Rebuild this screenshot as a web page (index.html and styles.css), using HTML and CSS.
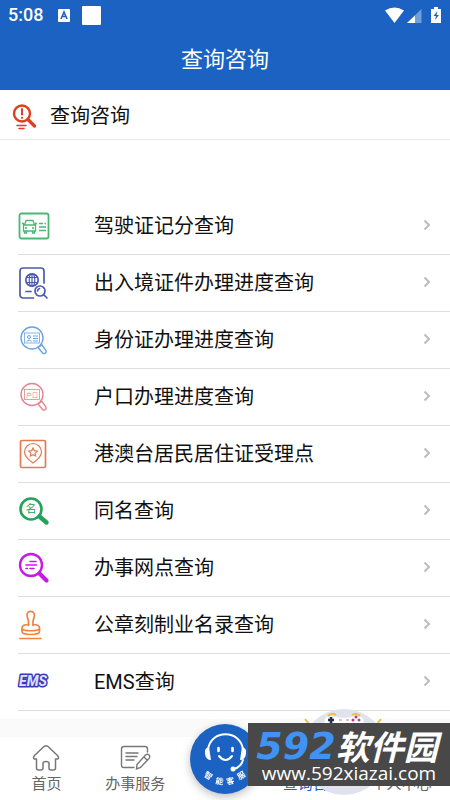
FILE: index.html
```html
<!DOCTYPE html>
<html lang="zh-CN">
<head>
<meta charset="utf-8">
<meta name="viewport" content="width=device-width, initial-scale=1">
<title>查询咨询</title>
<link rel="stylesheet" href="styles.css">
</head>
<body>
<header class="top">
  <div class="status">
    <span class="clock">5:08</span>
    <svg class="ime" viewBox="0 0 12 13"><rect width="12" height="13" rx="1" fill="#fff"/><path d="M3 10L6 3L9 10M4.200 7.500H7.800" fill="none" stroke="#1b62c2" stroke-width="1.600"/></svg>
    <span class="block"></span>
    <svg class="signals" viewBox="0 0 58 18">
      <path d="M1 4.500Q10.500-1.500 20 4.500L10.500 17Z" fill="#fff"/>
      <path d="M23 17L37.500 3V17Z" fill="#6f9edb"/><path d="M23 17L31 9.500V17Z" fill="#fff"/>
      <path d="M47 3h3V1h4v2h3v14H47Z" fill="#fff"/><path d="M53.500 5L49.500 10H52L51 14L55 9H52.500Z" fill="#1b62c2"/>
    </svg>
  </div>
  <h1>查询咨询</h1>
</header>
<main>
  <h2 class="section">
    <svg class="section-icon" viewBox="0 0 26 28" fill="none" stroke="#df3f1c" stroke-linecap="round">
      <circle cx="11" cy="10.500" r="8" stroke-width="2.400"/><path d="M17 16.500L23.500 23" stroke-width="3.400"/><path d="M11 6v5.500M11 14.800v.2" stroke-width="2"/><path d="M6 22.500h9M8 25.500h5" stroke-width="1.600"/>
    </svg>
    查询咨询
  </h2>
  <ul class="list">
    <li><a href="#">
      <svg class="icon" viewBox="0 0 32 32" fill="none" stroke="#49b872" stroke-width="1.300"><rect x="1.500" y="3.500" width="29" height="25" rx="2" stroke-width="1.800"/><path d="M6.500 15L8 10.500h7l1.500 4.500M5.500 15h12v6h-12zM4 13.500h2M17 13.500h2M6.500 21v2h2v-2M14.500 21v2h2v-2M7 18h2M14 18h2M21 13.500h4M21 17h7M21 20.500h7M26.500 13.500h1.500"/></svg>
      <span>驾驶证记分查询</span><svg class="chev" viewBox="0 0 8 12"><path d="M1.500 1.500L6 6L1.500 10.500"/></svg></a></li>
    <li><a href="#">
      <svg class="icon" viewBox="0 0 32 32" fill="none" stroke="#4a5bb0" stroke-width="1.700" stroke-linecap="round"><path d="M15.500 31H5a3 3 0 0 1-3-3V4a3 3 0 0 1 3-3h18a3 3 0 0 1 3 3v12"/><circle cx="14" cy="13" r="6.200"/><ellipse cx="14" cy="13" rx="2.800" ry="6.200" stroke-width="1.200"/><path d="M8.500 10.500h11M8.500 15.500h11M14 7v12" stroke-width="1.200"/><path d="M8 24.500h5"/><circle cx="22" cy="24" r="5"/><path d="M25.500 27.500L29 31M19.500 24a3 3 0 0 1 2-2.500"/></svg>
      <span>出入境证件办理进度查询</span><svg class="chev" viewBox="0 0 8 12"><path d="M1.500 1.500L6 6L1.500 10.500"/></svg></a></li>
    <li><a href="#">
      <svg class="icon" viewBox="0 0 32 32" fill="none" stroke="#68a4e3" stroke-width="1.400"><circle cx="14" cy="14" r="11"/><rect x="6.500" y="9" width="15" height="10" stroke-width=".8"/><path d="M15 12h5M15 14.500h5M15 17h5M8.500 17.500q2.500-3 5 0" stroke-width="1"/><circle cx="11" cy="13" r="1.500" stroke-width="1"/><path d="M20 23.500l4-2.500 4 5.500a2.200 2.200 0 0 1-3.500 2.500z"/></svg>
      <span>身份证办理进度查询</span><svg class="chev" viewBox="0 0 8 12"><path d="M1.500 1.500L6 6L1.500 10.500"/></svg></a></li>
    <li><a href="#">
      <svg class="icon" viewBox="0 0 32 32" fill="none" stroke="#e38690" stroke-width="1.400"><circle cx="14" cy="13.500" r="11"/><rect x="6.500" y="8.500" width="15" height="10" stroke-width=".8"/><text class="micro" x="14" y="16" text-anchor="middle" fill="#e38690" stroke="none">户口</text><path d="M20 23l4-2.500 4 5.500a2.200 2.200 0 0 1-3.500 2.500z"/></svg>
      <span>户口办理进度查询</span><svg class="chev" viewBox="0 0 8 12"><path d="M1.500 1.500L6 6L1.500 10.500"/></svg></a></li>
    <li><a href="#">
      <svg class="icon" viewBox="0 0 32 32" fill="none" stroke="#e47a50" stroke-width="1.200"><rect x="2.500" y="2.500" width="25" height="27" rx="1.500" stroke-width="1.700"/><path d="M15 25Q6.500 19 6.500 14a8.500 8.500 0 0 1 17 0Q23.500 19 15 25Z"/><path d="M15 10l1.300 2.700 3 .4-2.200 2 .5 2.900L15 16.600 12.400 18l.5-2.900-2.200-2 3-.4z"/></svg>
      <span>港澳台居民居住证受理点</span><svg class="chev" viewBox="0 0 8 12"><path d="M1.500 1.500L6 6L1.500 10.500"/></svg></a></li>
    <li><a href="#">
      <svg class="icon" viewBox="0 0 32 32" fill="none" stroke="#25a35a" stroke-linecap="round"><circle cx="13" cy="14" r="10.500" stroke-width="2.600"/><path d="M21.500 21.500L28.500 27.500" stroke-width="4.400"/><text class="mini" x="13" y="18" text-anchor="middle" fill="#25a35a" stroke="none">名</text></svg>
      <span>同名查询</span><svg class="chev" viewBox="0 0 8 12"><path d="M1.500 1.500L6 6L1.500 10.500"/></svg></a></li>
    <li><a href="#">
      <svg class="icon" viewBox="0 0 32 32" fill="none" stroke="#c61be3" stroke-linecap="round"><circle cx="13" cy="13" r="11" stroke-width="2.400"/><path d="M21.500 21.500L28.500 28.500" stroke-width="4.200"/><path d="M12 9.500h6M8 13h10.500M8 16.500h1.500M12 16.500h4" stroke-width="1.500"/></svg>
      <span>办事网点查询</span><svg class="chev" viewBox="0 0 8 12"><path d="M1.500 1.500L6 6L1.500 10.500"/></svg></a></li>
    <li><a href="#">
      <svg class="icon" viewBox="0 0 32 32" fill="none" stroke="#ee8344" stroke-width="1.700" stroke-linecap="round"><path d="M10.500 16.500V12Q9 8 9 6a3.700 3.700 0 0 1 7.400 0Q16.400 8 15 12v4.500"/><path d="M10.500 15.500C6 15.500 4 17 4 19v3.500c0 4 17.500 4 17.500 0V19c0-2-2-3.500-6.500-3.500M4 19.500c1 3 16.500 3 17.500 0M2 29.500h21"/></svg>
      <span>公章刻制业名录查询</span><svg class="chev" viewBox="0 0 8 12"><path d="M1.500 1.500L6 6L1.500 10.500"/></svg></a></li>
    <li><a href="#">
      <svg class="icon" viewBox="0 0 32 32"><text class="ems" x="15" y="20" text-anchor="middle">EMS</text></svg>
      <span>EMS查询</span><svg class="chev" viewBox="0 0 8 12"><path d="M1.500 1.500L6 6L1.500 10.500"/></svg></a></li>
  </ul>
</main>
<footer>
  <nav class="tabs">
    <a href="#"><svg viewBox="0 0 32 30" fill="none" stroke="#777" stroke-width="1.500" stroke-linejoin="round"><path d="M6.500 17H4.500Q2.500 16 4.500 13.500L14 4.500Q16 3 18 4.500L27.500 13.500Q29.500 16 27.500 17H25.500V26Q25.500 28 23.500 28H21Q19 28 19 26V21.500Q19 19.500 16 19.500T13 21.500V26Q13 28 11 28H8.500Q6.500 28 6.500 26Z"/></svg><span>首页</span></a>
    <a href="#"><svg viewBox="0 0 32 30" fill="none" stroke="#777" stroke-width="1.400" stroke-linecap="round"><path d="M15 25.500H5Q2.500 25.500 2.500 23V7Q2.500 4.500 5 4.500H26Q28.500 4.500 28.500 7V10M7 11h12M7 14.500h11M7 18h8M18 22.500L26.500 13q2-1.500 3.500 0t0 3.500L21.500 25.500l-4 1.500zM25 15l3 3"/></svg><span>办事服务</span></a>
    <a class="center" href="#" aria-label="智能客服"></a>
    <a class="active" href="#"><svg viewBox="0 0 32 30"></svg><span>查询咨询</span></a>
    <a href="#"><svg viewBox="0 0 32 30"></svg><span>个人中心</span></a>
  </nav>
  <svg class="service" viewBox="0 0 90 90">
    <circle cx="45" cy="45" r="35" fill="#1b62c2"/>
    <g fill="none" stroke="#fff" stroke-width="2" stroke-linecap="round"><path d="M28 36C30 15 61 15 63 36M63 46Q61 53 54 55"/><path d="M38.500 34v3M52.500 34v3" stroke-width="2.600"/><path d="M39 42Q45.500 50 52 42"/></g>
    <path d="M29 33Q24 34 25 40T31 46ZM62 33Q67 34 66 40T60 46Z" fill="#fff"/><circle cx="53" cy="55" r="2.500" fill="#fff"/>
    <g class="arc" fill="#fff" text-anchor="middle"><text transform="translate(27 64) rotate(32)">智</text><text transform="translate(39 70) rotate(12)">能</text><text transform="translate(51 70) rotate(-12)">客</text><text transform="translate(63 64) rotate(-32)">服</text></g>
  </svg>
  <svg class="mascot" viewBox="0 0 90 90">
    <circle cx="45" cy="45" r="43" fill="#e0e3ec"/>
    <path d="M25 18Q24 8 32 9Q45 12 58 9Q66 8 65 18Z" fill="#fff" stroke="#e4e7ee"/>
    <path d="M29 9q4-4 8-1M53 8q4-3 8 1M6 12l4 5M82 12l-4 5" stroke="#edbd45" stroke-width="2" fill="none"/>
    <path d="M32 10v6M29 13h6" stroke="#222d4c" stroke-width="2.500"/><circle cx="57" cy="10" r="1.500" fill="#d33568"/><circle cx="54" cy="13" r="1.500" fill="#d33568"/><circle cx="60" cy="13" r="1.500" fill="#8557b6"/><path d="M40 13h3M47 13h3" stroke="#d37979"/>
  </svg>
  <div class="brand"><div class="brand-name"><b>592</b><strong>软件园</strong></div><div class="site">www.592xiazai.com</div></div>
</footer>
</body>
</html>
```
FILE: styles.css
```css
* { box-sizing: border-box; }
body {
  margin: 0;
  height: 100vh;
  display: flex;
  flex-direction: column;
  overflow: hidden;
  background: #fff;
  color: #111;
  font-family: Roboto, "Noto Sans CJK SC", sans-serif;
}
a { color: inherit; text-decoration: none; }
h1, h2, ul { margin: 0; padding: 0; font-weight: 400; }
.top { background: #1b62c2; color: #fff; flex: none; }
.status { display: flex; align-items: center; height: 30px; padding: 0 8px; }
.clock { font-size: 18px; font-weight: 500; width: 50px; line-height: 30px; }
.ime { width: 12px; height: 13px; }
.block { width: 19px; height: 19px; margin-left: 12px; background: #fff; border-radius: 1px; }
.signals { width: 58px; height: 18px; margin-left: auto; }
h1 { height: 60px; line-height: 60px; font-size: 22px; text-align: center; }
main { flex: 1; min-height: 0; overflow: hidden; }
.section {
  display: flex;
  align-items: center;
  gap: 13px;
  height: 50px;
  padding: 0 12px 0 11px;
  border-bottom: 1px solid #e8e8e8;
  font-size: 20px;
}
.section-icon { width: 26px; height: 28px; margin-top: 4px; }
.list { list-style: none; padding: 58px 0 0 18px; }
.list a {
  display: flex;
  align-items: center;
  height: 57px;
  padding-right: 18px;
  border-bottom: 1px solid #dedede;
  font-size: 20px;
}
.list span { flex: 1; margin-left: 44px; padding-bottom: 3px; }
.icon { width: 32px; height: 32px; overflow: visible; }
.chev { width: 10px; height: 12px; margin-bottom: 2px; fill: none; stroke: #bcbcbc; stroke-width: 2; }
.micro { font-size: 6px; }
.mini { font-size: 11px; }
.ems {
  font: italic 700 14px Roboto, sans-serif;
  fill: #e0e2fc;
  stroke: #3a3ab8;
  stroke-width: 3;
  stroke-linejoin: round;
  paint-order: stroke;
}
footer { flex: none; position: relative; border-top: 18px solid #fafafa; }
.tabs { display: flex; height: 63px; padding: 0 4px 0 2px; background: #fff; color: #666; font-size: 15px; }
.tabs a { flex: 1; display: flex; flex-direction: column; align-items: center; padding-top: 5px; }
.tabs svg { width: 32px; height: 30px; }
.tabs span { line-height: 24px; white-space: nowrap; }
.tabs .active { color: #1b62c2; }
.service {
  position: absolute;
  left: calc(50% - 45px);
  bottom: -4px;
  width: 90px;
  height: 90px;
  filter: drop-shadow(0 3px 4px rgba(0, 0, 0, .25));
}
.arc { font-size: 8px; font-weight: 700; }
.mascot { position: absolute; right: 61px; bottom: 3px; width: 90px; height: 90px; }
.brand {
  position: absolute;
  right: 0;
  bottom: 14px;
  width: 202px;
  height: 63px;
  background: #484848;
  color: #fff;
  text-align: center;
}
.brand-name {
  display: flex;
  align-items: center;
  justify-content: center;
  height: 40px;
  padding: 6px 4px 0 0;
  line-height: 32px;
  white-space: nowrap;
}
.brand b { color: #4192f5; font: italic 700 38px/32px "DejaVu Sans", sans-serif; }
.brand strong { font: italic 700 34px/32px "Noto Sans CJK SC", sans-serif; }
.site { font: 500 19px/20px "Open Sans", sans-serif; }
```
